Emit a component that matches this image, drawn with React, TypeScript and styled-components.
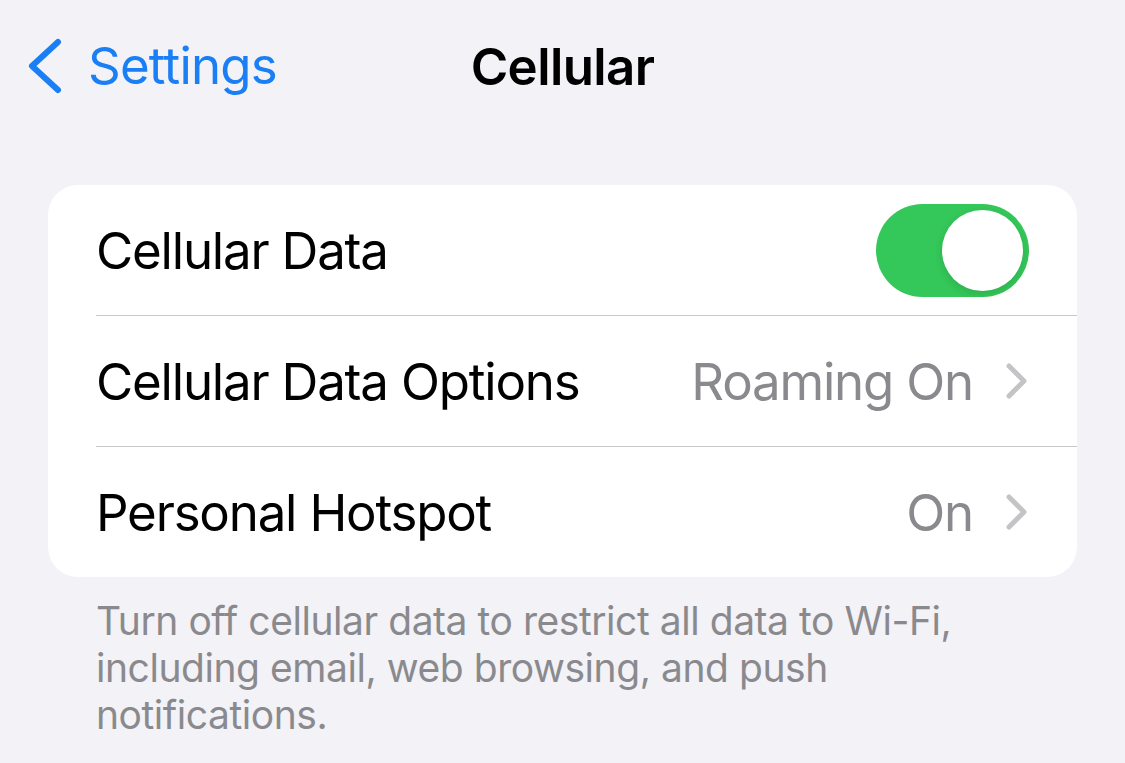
import { createGlobalStyle, styled } from 'styled-components';

const GlobalStyle = createGlobalStyle`
  html, body {
    margin: 0;
    padding: 0;
    background: #f2f2f7;
  }
  body {
    font-family: Inter, "Noto Sans", "Liberation Sans", sans-serif;
    -webkit-font-smoothing: antialiased;
  }
`;

interface Row {
  label: string;
  value?: string;
  toggle?: boolean;
}

const rows: Row[] = [
  { label: 'Cellular Data', toggle: true },
  { label: 'Cellular Data Options', value: 'Roaming On' },
  { label: 'Personal Hotspot', value: 'On' },
];

const BackChevron = () => (
  <svg width='40' height='56' viewBox='0 0 40 56' fill='none'>
    <path
      d='M32 4 L6 28 L32 52'
      stroke='#1a7ff5'
      strokeWidth='6'
      strokeLinecap='round'
      strokeLinejoin='round'
    />
  </svg>
);

const Disclosure = () => (
  <svg width='24' height='36' viewBox='0 0 24 36' fill='none'>
    <path
      d='M4 3 L19 18 L4 33'
      stroke='#c4c4c7'
      strokeWidth='5'
      strokeLinecap='round'
      strokeLinejoin='round'
    />
  </svg>
);

export default function App() {
  return (
    <Page>
      <GlobalStyle />
      <NavBar>
        <BackButton>
          <BackChevron />
          <span>Settings</span>
        </BackButton>
        <Title>Cellular</Title>
      </NavBar>
      <Card>
        {rows.map((row, i) => (
          <Item key={row.label} $last={i === rows.length - 1}>
            <Label>{row.label}</Label>
            {row.toggle ? (
              <Switch>
                <Knob />
              </Switch>
            ) : (
              <Trailing>
                <Value>{row.value}</Value>
                <Disclosure />
              </Trailing>
            )}
          </Item>
        ))}
      </Card>
      <Footer>
        Turn off cellular data to restrict all data to Wi-Fi, including email, web
        browsing, and push notifications.
      </Footer>
    </Page>
  );
}

const Page = styled.div`
  width: 1125px;
  min-height: 763px;
  background: #f2f2f7;
  overflow: hidden;
`;

const NavBar = styled.div`
  position: relative;
  height: 132px;
  display: flex;
  align-items: center;
  justify-content: center;
  margin-bottom: 53px;
`;

const BackButton = styled.div`
  position: absolute;
  left: 26px;
  top: 38px;
  display: flex;
  align-items: center;
  gap: 22px;
  color: #1a7ff5;
  font-size: 51px;
  letter-spacing: -0.8px;
  line-height: 56px;
`;

const Title = styled.div`
  font-size: 51px;
  font-weight: 600;
  letter-spacing: -0.6px;
  color: #000;
`;

const Card = styled.div`
  margin: 0 48px;
  background: #fff;
  border-radius: 30px;
  overflow: hidden;
`;

const Item = styled.div<{ $last: boolean }>`
  height: 130px;
  margin-left: 48px;
  padding-right: 48px;
  display: flex;
  align-items: center;
  justify-content: space-between;
  border-bottom: ${p => (p.$last ? 'none' : '1.5px solid #c8c8cb')};
`;

const Label = styled.div`
  font-size: 51px;
  letter-spacing: -1.2px;
  color: #000;
`;

const Trailing = styled.div`
  display: flex;
  align-items: center;
  gap: 32px;
`;

const Value = styled.div`
  font-size: 51px;
  letter-spacing: -1.2px;
  color: #8a8a8e;
`;

const Switch = styled.div`
  width: 153px;
  height: 93px;
  border-radius: 47px;
  background: #34c759;
  display: flex;
  align-items: center;
  justify-content: flex-end;
  padding: 0 6px;
  box-sizing: border-box;
`;

const Knob = styled.div`
  width: 81px;
  height: 81px;
  border-radius: 50%;
  background: #fff;
  box-shadow: 0 3px 8px rgba(0, 0, 0, 0.12);
`;

const Footer = styled.div`
  margin: 20px 96px 0;
  font-size: 39px;
  line-height: 47px;
  letter-spacing: -0.45px;
  color: #8a8a8e;
`;
